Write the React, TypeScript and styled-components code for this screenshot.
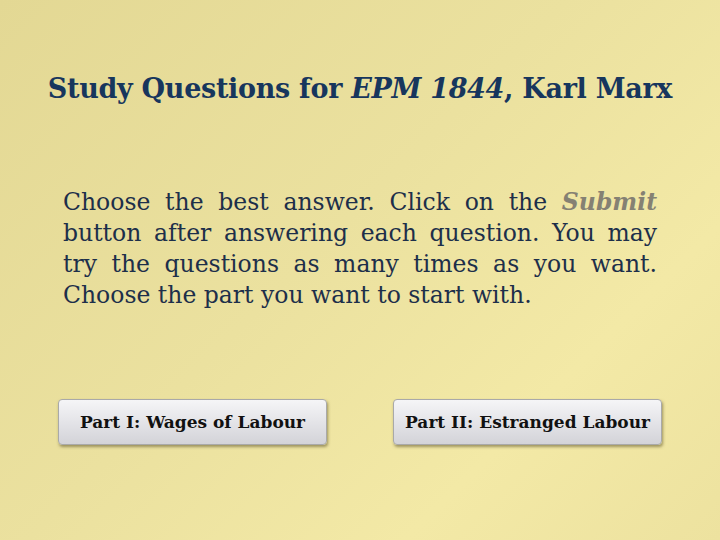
import React from "react";
import styled, { createGlobalStyle } from "styled-components";

const GlobalStyle = createGlobalStyle`
    html, body {
        margin: 0;
        padding: 0;
    }
    body {
        font-family: "DejaVu Serif", "Liberation Serif", serif;
    }
`;

const Slide = styled.main`
    width: 720px;
    height: 540px;
    box-sizing: border-box;
    display: flex;
    flex-direction: column;
    align-items: center;
    padding-top: 73px;
    background: linear-gradient(135deg, #e3d894 0%, #ebe19f 45%, #f3e9a6 75%, #ede29f 100%);
    overflow: hidden;
`;

const Title = styled.h1`
    margin: 0;
    font-size: 27px;
    line-height: 32px;
    font-weight: 700;
    color: #17365d;
    letter-spacing: -0.3px;
    white-space: nowrap;

    em {
        font-style: italic;
    }
`;

const Intro = styled.p`
    width: 594px;
    margin: 82px 0 0;
    font-size: 23.5px;
    line-height: 31px;
    color: #1d2f4a;
    text-align: justify;

    b {
        color: #858173;
        font-style: italic;
    }
`;

const ButtonRow = styled.div`
    width: 604px;
    display: flex;
    justify-content: space-between;
    margin-top: 88px;
`;

const PartButton = styled.button`
    width: 269px;
    height: 46px;
    border: 1px solid #a9a9a9;
    border-radius: 4px;
    background: linear-gradient(to bottom, #f5f5f7 0%, #e4e4e8 50%, #d3d3d8 100%);
    box-shadow: 1px 2px 3px rgba(90, 80, 40, 0.55);
    font-family: "DejaVu Serif", "Liberation Serif", serif;
    font-size: 17px;
    font-weight: 700;
    color: #111;
    cursor: pointer;
`;

function App() {
    return (
        <>
            <GlobalStyle />
            <Slide>
                <Title>
                    Study Questions for <em>EPM 1844</em>, Karl Marx
                </Title>
                <Intro>
                    Choose the best answer. Click on the <b>Submit</b> button after
                    answering each question. You may try the questions as many times as
                    you want. Choose the part you want to start with.
                </Intro>
                <ButtonRow>
                    <PartButton>Part I: Wages of Labour</PartButton>
                    <PartButton>Part II: Estranged Labour</PartButton>
                </ButtonRow>
            </Slide>
        </>
    );
}

export default App;
